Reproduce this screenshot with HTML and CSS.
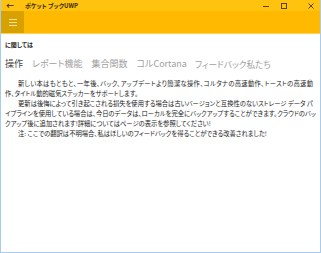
FILE: index.html
```html
<!DOCTYPE html>
<html lang="ja">
<head>
<meta charset="UTF-8">
<title>ポケット ブックUWP</title>
<link rel="stylesheet" href="styles.css">
</head>
<body>
<div class="window">
    <div class="titlebar">
        <span class="back">&#8592;</span>
        <span class="title">ポケット ブックUWP</span>
        <div class="controls">
            <svg width="8" height="8" viewBox="0 0 8 8"><path d="M1 4.5h6" stroke="#5a4300" stroke-width="1"/></svg>
            <svg width="8" height="8" viewBox="0 0 8 8"><rect x="1.5" y="1.5" width="5" height="5" fill="none" stroke="#5a4300" stroke-width="1"/></svg>
            <svg width="8" height="8" viewBox="0 0 8 8"><path d="M1.5 1.5l5 5M6.5 1.5l-5 5" stroke="#5a4300" stroke-width="1"/></svg>
        </div>
    </div>
    <div class="appbar">
        <div class="hamburger">
            <span></span><span></span><span></span>
        </div>
    </div>
    <div class="content">
        <div class="heading">に関しては</div>
        <div class="tabs">
            <span class="tab active">操作</span>
            <span class="tab">レポート機能</span>
            <span class="tab">集合関数</span>
            <span class="tab">コルCortana</span>
            <span class="tab">フィードバック私たち</span>
        </div>
        <div class="text">
            <p><span class="ln">新しい本はもともと、一年後、バック、アップデートより簡潔な操作、コルタナの高速動作、トーストの高速動</span>作、タイトル動的磁気ステッカーをサポートします。</p>
            <p><span class="ln">更新は後悔によって引き起こされる損失を使用する場合は古いバージョンと互換性のないストレージ データ パ</span><span class="ln">イプラインを使用している場合は、今日のデータは、ローカルを完全にバックアップすることができます。クラウドのバッ</span>クアップ後に追加されます!詳細についてはページの表示を参照してください!</p>
            <p>注: ここでの翻訳は不明場合、私はほしいのフィードバックを得ることができる改善されました!</p>
        </div>
    </div>
</div>
</body>
</html>
```

FILE: styles.css
```css
*{box-sizing:border-box;margin:0;padding:0}
body{
    font-family:"Noto Sans CJK JP","Noto Sans",sans-serif;
    font-feature-settings:"palt";
    background:#fff;
}

/* ─── Window ─────────────────────────────────────────── */
.window{
    width:321px;height:253px;
    border:1px solid #a6cdee;border-top:none;
    display:flex;flex-direction:column;
}

.titlebar{
    height:11px;background:#ffc20e;
    display:flex;align-items:center;
    color:#3b2c00;
}
.back{font-size:8px;width:24px;padding-left:5px;font-weight:bold}
.title{font-size:6px;font-weight:bold}
.controls{margin-left:auto;display:flex;gap:10px;margin-right:5px}
.controls svg:last-child{margin-left:9px}

.appbar{
    height:23px;background:#ffb900;
    border-bottom:1px solid #ffd34f;
    display:flex;
}
.hamburger{
    width:23px;height:22px;background:#d9a100;
    display:flex;flex-direction:column;justify-content:center;align-items:center;gap:2px;
}
.hamburger span{display:block;width:8px;height:1px;background:#f6e2a6}

/* ─── Content ────────────────────────────────────────── */
.content{padding:6px 4px 0 4px;color:#222}
.heading{font-size:6px;font-weight:bold;line-height:10px}
.tabs{display:flex;margin-top:7px;line-height:14px}
.tab{font-size:9px;color:#a0a0a0;margin-right:9px}
.tab.active{color:#444}
.tab:nth-child(4){margin-right:8px}
.tab:last-child{font-size:8.6px}

.text{margin-top:8px;width:308px;font-size:6.3px;line-height:10px;color:#222}
.text p{text-indent:13px;white-space:nowrap}
.text .ln{display:block;text-align:justify;text-align-last:justify}
.text .ln + .ln{text-indent:0}
```
